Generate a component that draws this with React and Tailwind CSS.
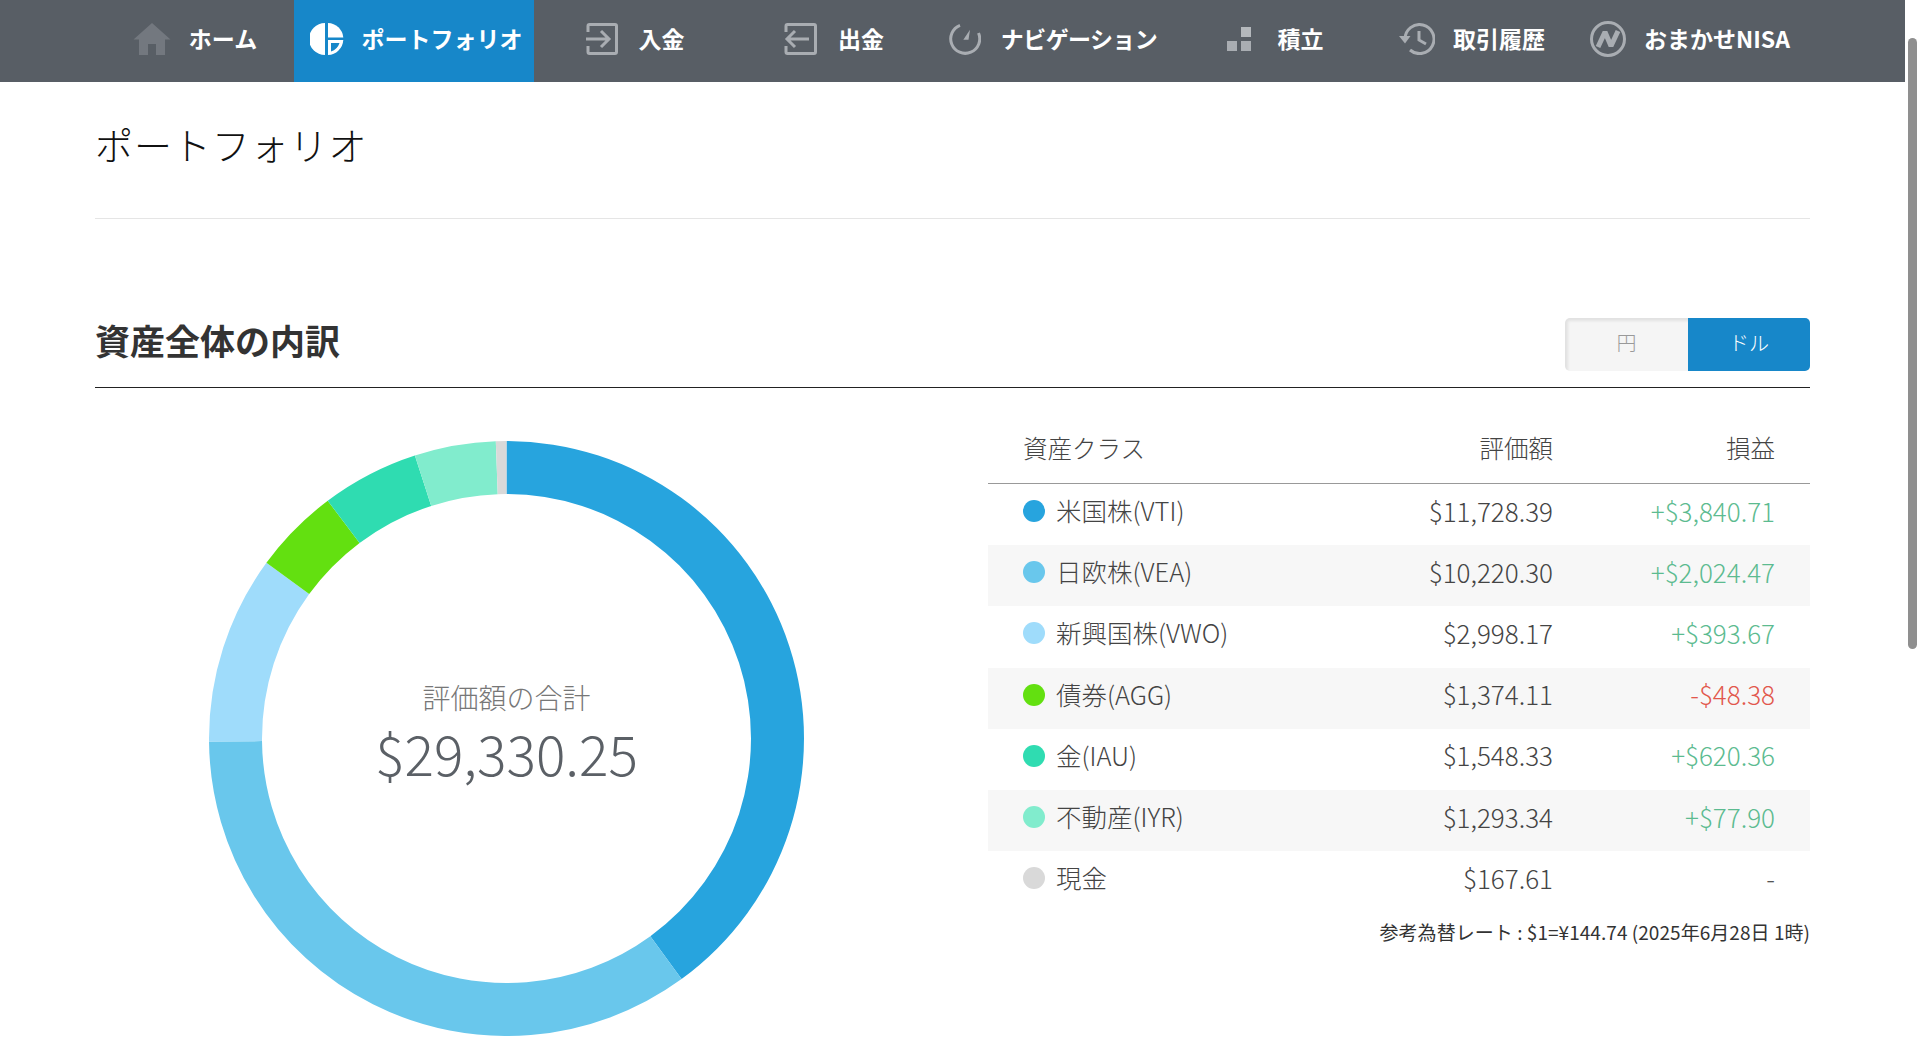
import React from 'react';

const FONT = '"Noto Sans CJK JP", "Noto Sans", sans-serif';

const assets = [
  { name: '米国株(VTI)', value: 11728.39, price: '$11,728.39', gain: '+$3,840.71', color: '#27a4de', tone: 'text-[#5cbb90]' },
  { name: '日欧株(VEA)', value: 10220.3, price: '$10,220.30', gain: '+$2,024.47', color: '#69c7ec', tone: 'text-[#5cbb90]' },
  { name: '新興国株(VWO)', value: 2998.17, price: '$2,998.17', gain: '+$393.67', color: '#9fdcfb', tone: 'text-[#5cbb90]' },
  { name: '債券(AGG)', value: 1374.11, price: '$1,374.11', gain: '-$48.38', color: '#63e010', tone: 'text-[#e2574c]' },
  { name: '金(IAU)', value: 1548.33, price: '$1,548.33', gain: '+$620.36', color: '#2fdcb1', tone: 'text-[#5cbb90]' },
  { name: '不動産(IYR)', value: 1293.34, price: '$1,293.34', gain: '+$77.90', color: '#81eccd', tone: 'text-[#5cbb90]' },
  { name: '現金', value: 167.61, price: '$167.61', gain: '-', color: '#d9d9d9', tone: 'text-[#555]' },
];

function HomeIcon() {
  return (
    <svg width="38" height="32" viewBox="0 0 38 32" fill="#73787f">
      <path d="M19 0 L37.500 16.500 L32 16.500 L32 32 L23 32 L23 21 L15 21 L15 32 L6 32 L6 16.500 L0.500 16.500 Z" />
    </svg>
  );
}

function PortfolioIcon() {
  return (
    <svg width="34" height="32" viewBox="0 0 34 32" fill="#fff">
      <path d="M15 0 A16 16 0 0 0 15 32 Z" />
      <path d="M18 0 A16 16 0 0 1 33.300 14.500 L18 14.500 Z" />
      <path fillRule="evenodd" d="M18 17 L33.300 17 A16 16 0 0 1 18 32 Z M21 20 L21 28.500 A13 13 0 0 0 29.500 20 Z" />
    </svg>
  );
}

function DepositIcon() {
  return (
    <svg width="32" height="32" viewBox="0 0 32 32" fill="none" stroke="#a9adb2" strokeWidth="3">
      <path d="M2 9 L2 3 Q2 1.500 3.500 1.500 L29 1.500 Q30.500 1.500 30.500 3 L30.500 29 Q30.500 30.500 29 30.500 L3.500 30.500 Q2 30.500 2 29 L2 23" />
      <path d="M0 16 L23 16 M15 8 L23 16 L15 24" />
    </svg>
  );
}

function WithdrawIcon() {
  return (
    <svg width="33" height="32" viewBox="0 0 33 32" fill="none" stroke="#a9adb2" strokeWidth="3">
      <path d="M2 9 L2 3 Q2 1.500 3.500 1.500 L30 1.500 Q31.500 1.500 31.500 3 L31.500 29 Q31.500 30.500 30 30.500 L3.500 30.500 Q2 30.500 2 29 L2 23" />
      <path d="M25 16 L3 16 M11 8 L3 16 L11 24" />
    </svg>
  );
}

function GaugeIcon() {
  return (
    <svg width="32" height="32" viewBox="0 0 32 32" fill="none" stroke="#a9adb2" strokeWidth="3">
      <path d="M11 2.300 A14.500 14.500 0 1 0 29.500 10" />
      <path d="M21 6.700 L14.300 16.700 L19.500 16.700 Z" fill="#a9adb2" stroke="none" />
    </svg>
  );
}

function BlocksIcon() {
  return (
    <div className="w-[33px]">
      <svg width="24" height="24" viewBox="0 0 24 24" fill="#a9adb2" className="block">
        <rect x="0" y="14" width="10" height="10" />
        <rect x="14" y="14" width="10" height="10" />
        <rect x="14" y="0" width="10" height="10" fill="#b4b8bc" />
      </svg>
    </div>
  );
}

function HistoryIcon() {
  return (
    <svg width="36" height="32" viewBox="0 0 36 32" fill="none" stroke="#a9adb2" strokeWidth="3">
      <path d="M6 16 A14.500 14.500 0 1 1 11 27" />
      <path d="M0 13 L11.500 13 L6 20.500 Z" fill="#a9adb2" stroke="none" />
      <path d="M20 8 L20 17 L27 21" />
    </svg>
  );
}

function NisaIcon() {
  return (
    <svg width="36" height="36" viewBox="0 0 36 36" fill="none" stroke="#a9adb2">
      <circle cx="18" cy="18" r="16.500" strokeWidth="3" />
      <path d="M8 26 L15 11 L21 25 L28 10" strokeWidth="5" strokeLinejoin="bevel" />
    </svg>
  );
}

const navItems = [
  { label: 'ホーム', icon: <HomeIcon />, box: 'w-[198px] gap-[18px]' },
  { label: 'ポートフォリオ', icon: <PortfolioIcon />, box: 'w-[240px] gap-[18px] pl-[4px] bg-[#1787c9]' },
  { label: '入金', icon: <DepositIcon />, box: 'w-[200px] gap-[21px] pl-[2px]' },
  { label: '出金', icon: <WithdrawIcon />, box: 'w-[198px] gap-[21px] pl-[2px]' },
  { label: 'ナビゲーション', icon: <GaugeIcon />, box: 'w-[242px] gap-[20px]', text: 'tracking-[-0.6px]' },
  { label: '積立', icon: <BlocksIcon />, box: 'w-[202px] gap-[18px]' },
  { label: '取引履歴', icon: <HistoryIcon />, box: 'w-[190px] gap-[18px] pl-[2px]' },
  { label: 'おまかせNISA', icon: <NisaIcon />, box: 'w-[244px] gap-[18px] pl-[4px]' },
];

function Donut() {
  const total = assets.reduce((sum, a) => sum + a.value, 0);
  const R = 297.5;
  const r = 244.5;
  let acc = 0;
  const point = (rad, t) => {
    const a = t * 2 * Math.PI;
    return `${(R + rad * Math.sin(a)).toFixed(2)} ${(R - rad * Math.cos(a)).toFixed(2)}`;
  };
  return (
    <svg width="595" height="595" viewBox="0 0 595 595" className="block">
      {assets.map((a) => {
        const start = acc / total;
        acc += a.value;
        const end = acc / total;
        const large = end - start > 0.5 ? 1 : 0;
        const d = `M${point(R, start)} A${R} ${R} 0 ${large} 1 ${point(R, end)} L${point(r, end)} A${r} ${r} 0 ${large} 0 ${point(r, start)} Z`;
        return <path key={a.name} d={d} fill={a.color} />;
      })}
    </svg>
  );
}

function App() {
  return (
    <div className="flex h-[1040px] w-full overflow-hidden bg-white text-[#333]" style={{ fontFamily: FONT }}>
      <div className="w-[1905px] shrink-0">
        {/* Nav */}
        <nav className="flex h-[82px] bg-[#585e65] pl-[96px]">
          {navItems.map((item) => (
            <div key={item.label} className={`flex h-full items-center justify-center pb-[5px] ${item.box}`}>
              {item.icon}
              <span className={`whitespace-nowrap text-[23px] font-bold text-white ${item.text || ''}`}>{item.label}</span>
            </div>
          ))}
        </nav>

        <main className="px-[95px]">
          {/* Title */}
          <div className="flex h-[137px] items-center border-b border-[#e5e5e5] pb-[13px]">
            <h1 className="text-[38px] font-light tracking-[0.9px] text-[#111]">ポートフォリオ</h1>
          </div>

          {/* Section head */}
          <div className="mt-[80px] flex h-[89px] items-center justify-between border-b border-[#222]">
            <h2 className="mb-[6px] text-[35px] font-bold text-[#333]">資産全体の内訳</h2>
            <div className="mt-[3px] flex h-[53px] w-[245px] overflow-hidden rounded-[5px] text-[20px]">
              <div className="flex w-[123px] items-center justify-center bg-[#f5f5f5] pb-[3px] font-light text-[#999] shadow-[inset_3px_3px_3px_rgba(0,0,0,0.08)]">円</div>
              <div className="flex w-[122px] items-center justify-center bg-[#1787c9] pb-[3px] font-light text-white">ドル</div>
            </div>
          </div>

          <div className="flex">
            {/* Chart */}
            <div className="w-[893px] shrink-0 pl-[114px] pt-[53px]">
              <div className="relative h-[595px] w-[595px]">
                <Donut />
                <div className="absolute inset-0 flex flex-col items-center justify-center pb-[13px] font-light text-[#5b6066]">
                  <div className="text-[28px] leading-[40px] text-[#777]">評価額の合計</div>
                  <div className="text-[55px] leading-[70px]">$29,330.25</div>
                </div>
              </div>
            </div>

            {/* Table */}
            <div className="w-[822px] pt-[31px]">
              <div className="flex h-[65px] items-center border-b border-[#999] px-[35px] pb-[5px] text-[24.5px] font-light text-[#444]">
                <div className="flex-1">資産クラス</div>
                <div className="w-[220px] text-right">評価額</div>
                <div className="w-[222px] text-right">損益</div>
              </div>
              {assets.map((a, i) => (
                <div
                  key={a.name}
                  className={`flex h-[61.2px] items-center px-[35px] pb-[9px] font-light text-[#444] ${i % 2 === 1 ? 'bg-[#f7f7f7]' : ''}`}
                >
                  <span className="mr-[11px] mt-[2px] h-[22px] w-[22px] rounded-full" style={{ backgroundColor: a.color }} />
                  <div className="flex-1 whitespace-nowrap text-[25.5px]">{a.name}</div>
                  <div className="w-[220px] text-right text-[26px]">{a.price}</div>
                  <div className={`w-[222px] text-right text-[26px] ${a.tone}`}>{a.gain}</div>
                </div>
              ))}
              <div className="mt-[6px] text-right text-[19px] tracking-[0.05px] text-[#333]">参考為替レート : $1=¥144.74 (2025年6月28日 1時)</div>
            </div>
          </div>
        </main>
      </div>

      {/* Scrollbar */}
      <div className="w-[15px] shrink-0 pl-[3px] pt-[38px]">
        <div className="h-[611px] w-[9px] rounded-full bg-[#8f8f8f]" />
      </div>
    </div>
  );
}

export default App;
